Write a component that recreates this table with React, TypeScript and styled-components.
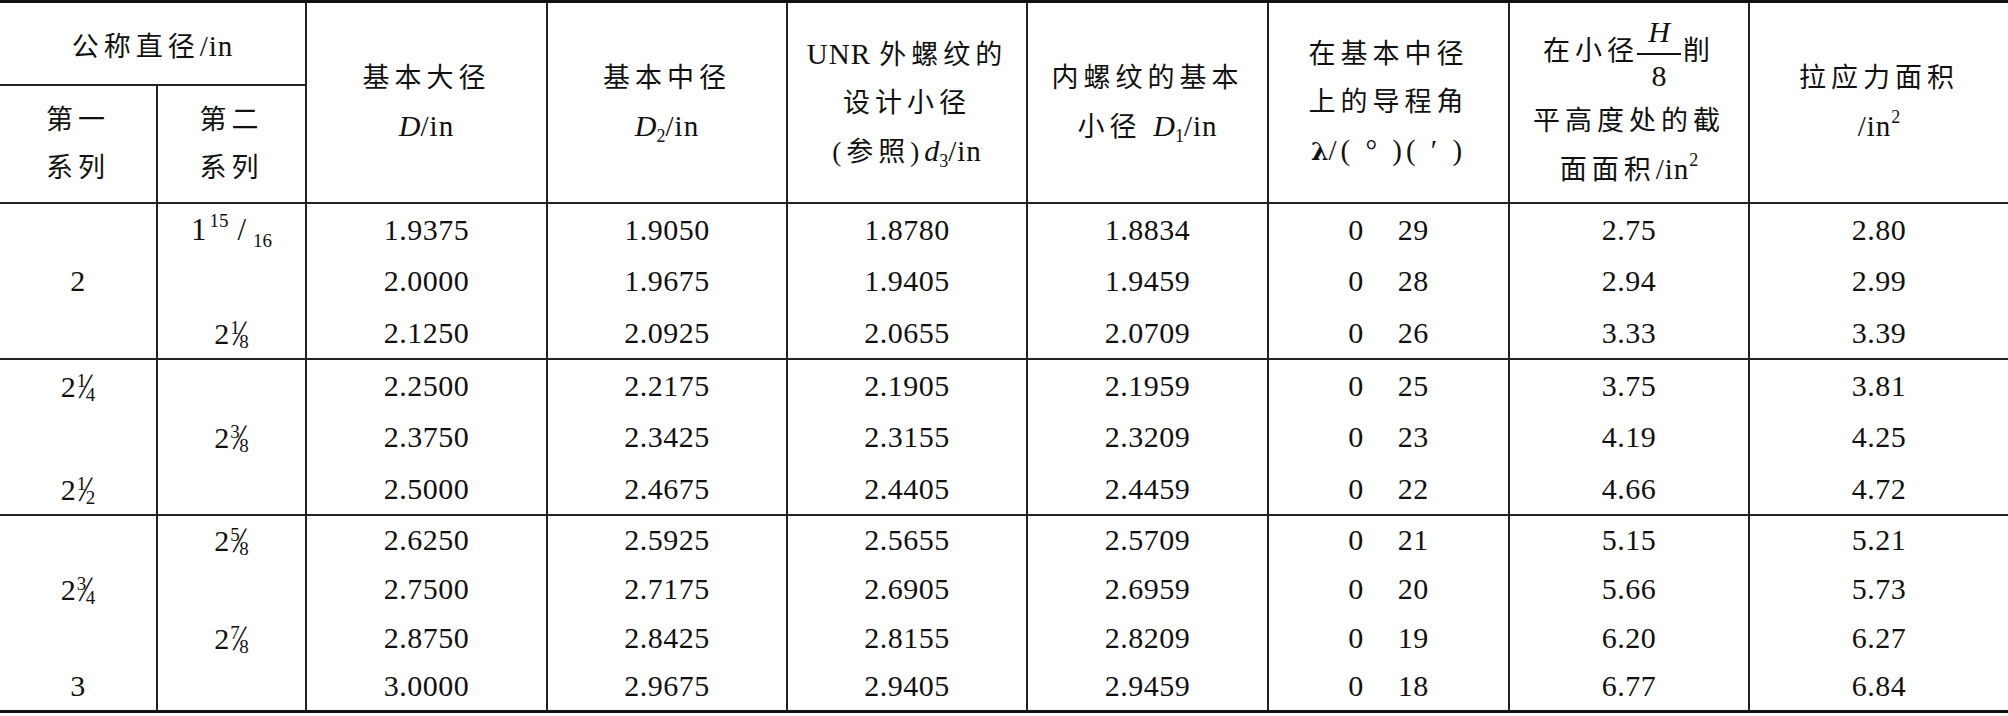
import React from 'react';
import styled, { createGlobalStyle } from 'styled-components';

const GlobalStyle = createGlobalStyle`
  html, body {
    margin: 0;
    padding: 0;
    background: #ffffff;
  }
  body {
    font-family: "Liberation Serif", "Noto Sans CJK SC", serif;
    color: #111111;
  }
`;

const Table = styled.table`
  width: 2008px;
  table-layout: fixed;
  border-collapse: collapse;
  border-top: 3px solid #111;
  border-bottom: 3px solid #111;
`;

const HeadCell = styled.th<{ $h?: number; $top?: number }>`
  border-left: 2px solid #222;
  border-right: 2px solid #222;
  border-bottom: 2px solid #222;
  padding: ${(p) => p.$top ?? 0}px 0 0 0;
  height: ${(p) => (p.$h ? `${p.$h}px` : 'auto')};
  font-weight: normal;
  font-size: 27px;
  line-height: 48px;
  letter-spacing: 5px;
  text-align: center;
  vertical-align: middle;
  white-space: nowrap;

  &:first-child {
    border-left: none;
  }
  &:last-child {
    border-right: none;
  }
`;

const Line = styled.div`
  display: block;
`;

const Latin = styled.span`
  font-family: "Liberation Serif", serif;
  font-size: 29px;
  letter-spacing: 1px;
`;

const Sym = styled.i`
  font-family: "Liberation Serif", serif;
  font-style: italic;
  font-size: 30px;
  letter-spacing: 0;
`;

const Lambda = styled.span`
  font-family: "DejaVu Serif", serif;
  font-weight: bold;
  font-size: 25px;
  letter-spacing: 0;
`;

const Sub = styled.sub`
  font-size: 18px;
  vertical-align: -6px;
  line-height: 0;
  letter-spacing: 0;
`;

const Sup = styled.sup`
  font-size: 18px;
  vertical-align: 13px;
  line-height: 0;
  letter-spacing: 0;
`;

const Frac = styled.span`
  display: inline-flex;
  flex-direction: column;
  align-items: center;
  vertical-align: middle;
  margin: 0 2px 0 -2px;
  line-height: 42px;
  font-family: "Liberation Serif", serif;
  font-size: 30px;
  letter-spacing: 0;
`;

const FracTop = styled.i`
  display: block;
  width: 44px;
  text-align: center;
  border-bottom: 2px solid #111;
`;

const FracBottom = styled.span`
  display: block;
`;

const Group = styled.tbody`
  border-top: 2px solid #222;
`;

const Row = styled.tr<{ $h: number }>`
  height: ${(p) => p.$h}px;
`;

const Cell = styled.td`
  border-left: 2px solid #222;
  border-right: 2px solid #222;
  padding: 0;
  font-size: 30px;
  letter-spacing: 0.5px;
  line-height: 1;
  text-align: center;
  vertical-align: middle;
  white-space: nowrap;

  &:first-child {
    border-left: none;
  }
  &:last-child {
    border-right: none;
  }
`;

const Angle = styled.span`
  display: inline-flex;
  gap: 34px;
`;

const Mix = styled.span`
  display: inline-flex;
  align-items: baseline;
  font-size: 30px;
  letter-spacing: 0;
`;

const MixNum = styled.span`
  font-size: 19px;
  position: relative;
  top: -10px;
  margin-left: 1px;
  margin-right: -5px;
`;

const MixSlash = styled.span`
  font-size: 34px;
  transform: skewX(-12deg) scaleY(1.05);
`;

const MixDen = styled.span`
  font-size: 19px;
  position: relative;
  top: 4px;
  margin-left: -5px;
`;

const BigNum = styled.span`
  display: inline-flex;
  align-items: baseline;
  font-size: 31px;
  letter-spacing: 0;
`;

const BigSup = styled.span`
  font-size: 19px;
  position: relative;
  top: -13px;
  margin-left: 3px;
`;

const BigSlash = styled.span`
  margin: 0 7px 0 9px;
`;

const BigSub = styled.span`
  font-size: 19px;
  position: relative;
  top: 7px;
`;

const MixedFrac = ({ w, n, d }: { w: string; n: string; d: string }) => (
  <Mix>
    {w}
    <MixNum>{n}</MixNum>
    <MixSlash>/</MixSlash>
    <MixDen>{d}</MixDen>
  </Mix>
);

type Group = {
  h: number;
  rows: [React.ReactNode, React.ReactNode, string, string, string, string, string, string, string, string][];
};

const sixteenths = (
  <BigNum>
    1<BigSup>15</BigSup>
    <BigSlash>/</BigSlash>
    <BigSub>16</BigSub>
  </BigNum>
);

const groups: Group[] = [
  {
    h: 52,
    rows: [
      ['', sixteenths, '1.9375', '1.9050', '1.8780', '1.8834', '0', '29', '2.75', '2.80'],
      ['2', '', '2.0000', '1.9675', '1.9405', '1.9459', '0', '28', '2.94', '2.99'],
      ['', <MixedFrac w="2" n="1" d="8" />, '2.1250', '2.0925', '2.0655', '2.0709', '0', '26', '3.33', '3.39'],
    ],
  },
  {
    h: 52,
    rows: [
      [<MixedFrac w="2" n="1" d="4" />, '', '2.2500', '2.2175', '2.1905', '2.1959', '0', '25', '3.75', '3.81'],
      ['', <MixedFrac w="2" n="3" d="8" />, '2.3750', '2.3425', '2.3155', '2.3209', '0', '23', '4.19', '4.25'],
      [<MixedFrac w="2" n="1" d="2" />, '', '2.5000', '2.4675', '2.4405', '2.4459', '0', '22', '4.66', '4.72'],
    ],
  },
  {
    h: 49,
    rows: [
      ['', <MixedFrac w="2" n="5" d="8" />, '2.6250', '2.5925', '2.5655', '2.5709', '0', '21', '5.15', '5.21'],
      [<MixedFrac w="2" n="3" d="4" />, '', '2.7500', '2.7175', '2.6905', '2.6959', '0', '20', '5.66', '5.73'],
      ['', <MixedFrac w="2" n="7" d="8" />, '2.8750', '2.8425', '2.8155', '2.8209', '0', '19', '6.20', '6.27'],
      ['3', '', '3.0000', '2.9675', '2.9405', '2.9459', '0', '18', '6.77', '6.84'],
    ],
  },
];

const widths = [157, 149, 241, 240, 240, 241, 241, 240, 259];

export default function App() {
  return (
    <>
      <GlobalStyle />
      <Table>
        <colgroup>
          {widths.map((w, i) => (
            <col key={i} style={{ width: w }} />
          ))}
        </colgroup>
        <thead>
          <tr>
            <HeadCell colSpan={2} $h={76} $top={5}>
              公称直径<Latin>/in</Latin>
            </HeadCell>
            <HeadCell rowSpan={2}>
              <Line>基本大径</Line>
              <Line>
                <Sym>D</Sym>
                <Latin>/in</Latin>
              </Line>
            </HeadCell>
            <HeadCell rowSpan={2}>
              <Line>基本中径</Line>
              <Line>
                <Sym>D</Sym>
                <Sub>2</Sub>
                <Latin>/in</Latin>
              </Line>
            </HeadCell>
            <HeadCell rowSpan={2}>
              <Line>
                <Latin>UNR </Latin>外螺纹的
              </Line>
              <Line>设计小径</Line>
              <Line>
                (参照)<Sym>d</Sym>
                <Sub>3</Sub>
                <Latin>/in</Latin>
              </Line>
            </HeadCell>
            <HeadCell rowSpan={2}>
              <Line>内螺纹的基本</Line>
              <Line>
                小径 <Sym>D</Sym>
                <Sub>1</Sub>
                <Latin>/in</Latin>
              </Line>
            </HeadCell>
            <HeadCell rowSpan={2}>
              <Line>在基本中径</Line>
              <Line>上的导程角</Line>
              <Line>
                <Lambda>λ</Lambda>
                <Latin style={{ letterSpacing: 4 }}>/( ° )( ′ )</Latin>
              </Line>
            </HeadCell>
            <HeadCell rowSpan={2}>
              <Line>
                在小径
                <Frac>
                  <FracTop>H</FracTop>
                  <FracBottom>8</FracBottom>
                </Frac>
                削
              </Line>
              <Line>平高度处的截</Line>
              <Line>
                面面积<Latin>/in</Latin>
                <Sup>2</Sup>
              </Line>
            </HeadCell>
            <HeadCell rowSpan={2}>
              <Line>拉应力面积</Line>
              <Line>
                <Latin>/in</Latin>
                <Sup>2</Sup>
              </Line>
            </HeadCell>
          </tr>
          <tr>
            <HeadCell $h={116}>
              <Line>第一</Line>
              <Line>系列</Line>
            </HeadCell>
            <HeadCell $h={116}>
              <Line>第二</Line>
              <Line>系列</Line>
            </HeadCell>
          </tr>
        </thead>
        {groups.map((g, gi) => (
          <Group key={gi}>
            {g.rows.map((r, ri) => (
              <Row key={ri} $h={g.h}>
                <Cell>{r[0]}</Cell>
                <Cell>{r[1]}</Cell>
                <Cell>{r[2]}</Cell>
                <Cell>{r[3]}</Cell>
                <Cell>{r[4]}</Cell>
                <Cell>{r[5]}</Cell>
                <Cell>
                  <Angle>
                    <span>{r[6]}</span>
                    <span>{r[7]}</span>
                  </Angle>
                </Cell>
                <Cell>{r[8]}</Cell>
                <Cell>{r[9]}</Cell>
              </Row>
            ))}
          </Group>
        ))}
      </Table>
    </>
  );
}
